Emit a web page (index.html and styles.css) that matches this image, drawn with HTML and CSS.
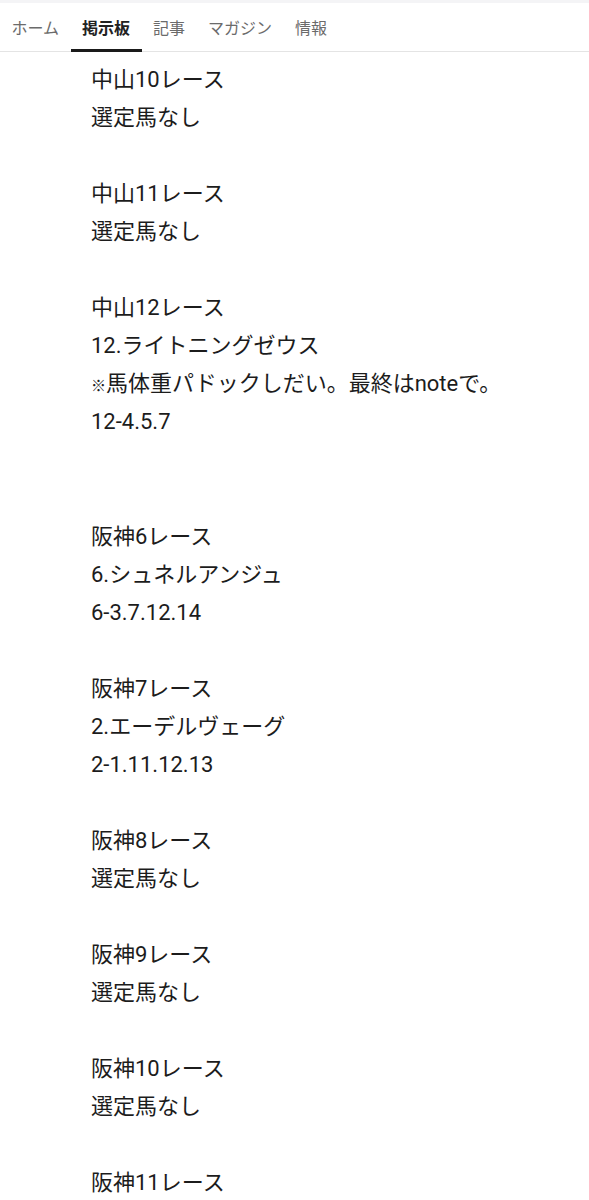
FILE: index.html
```html
<!DOCTYPE html>
<html lang="ja">
<head>
<meta charset="utf-8">
<title>掲示板</title>
<link rel="stylesheet" href="styles.css">
</head>
<body>
<div class="top-strip"></div>
<nav class="tabs">
  <a class="tab">ホーム</a>
  <a class="tab active">掲示板</a>
  <a class="tab">記事</a>
  <a class="tab">マガジン</a>
  <a class="tab">情報</a>
</nav>
<main class="post">
<div class="body">中山10レース
選定馬なし

中山11レース
選定馬なし

中山12レース
12.ライトニングゼウス
<span class="note-mark">※</span>馬体重パドックしだい。最終はnoteで。
12-4.5.7


阪神6レース
6.シュネルアンジュ
6-3.7.12.14

阪神7レース
2.エーデルヴェーグ
2-1.11.12.13

阪神8レース
選定馬なし

阪神9レース
選定馬なし

阪神10レース
選定馬なし

阪神11レース</div>
</main>
</body>
</html>
```

FILE: styles.css
```css
html, body {
  margin: 0;
  padding: 0;
  background: #ffffff;
}

body {
  font-family: Roboto, "Noto Sans CJK JP", sans-serif;
  color: #1c1c1c;
  overflow: hidden;
}

.top-strip {
  height: 3px;
  background: #f4f4f6;
}

.tabs {
  display: flex;
  height: 48px;
  border-bottom: 1px solid #e4e4e4;
}

.tab {
  position: relative;
  display: flex;
  align-items: center;
  padding: 0 11.5px;
  font-size: 16px;
  color: #6b6b6b;
  text-decoration: none;
}

.tab.active {
  color: #222222;
  font-weight: 700;
}

.tab.active::after {
  content: "";
  position: absolute;
  left: 0;
  right: 0;
  bottom: -1px;
  height: 3px;
  background: #1a1a1a;
}

.post {
  padding: 9px 20px 0 91px;
}

.body {
  white-space: pre-line;
  font-size: 22px;
  line-height: 38.05px;
}

/* the reference mark is set small */
.note-mark {
  font-size: 15px;
  line-height: 1;
}
```
